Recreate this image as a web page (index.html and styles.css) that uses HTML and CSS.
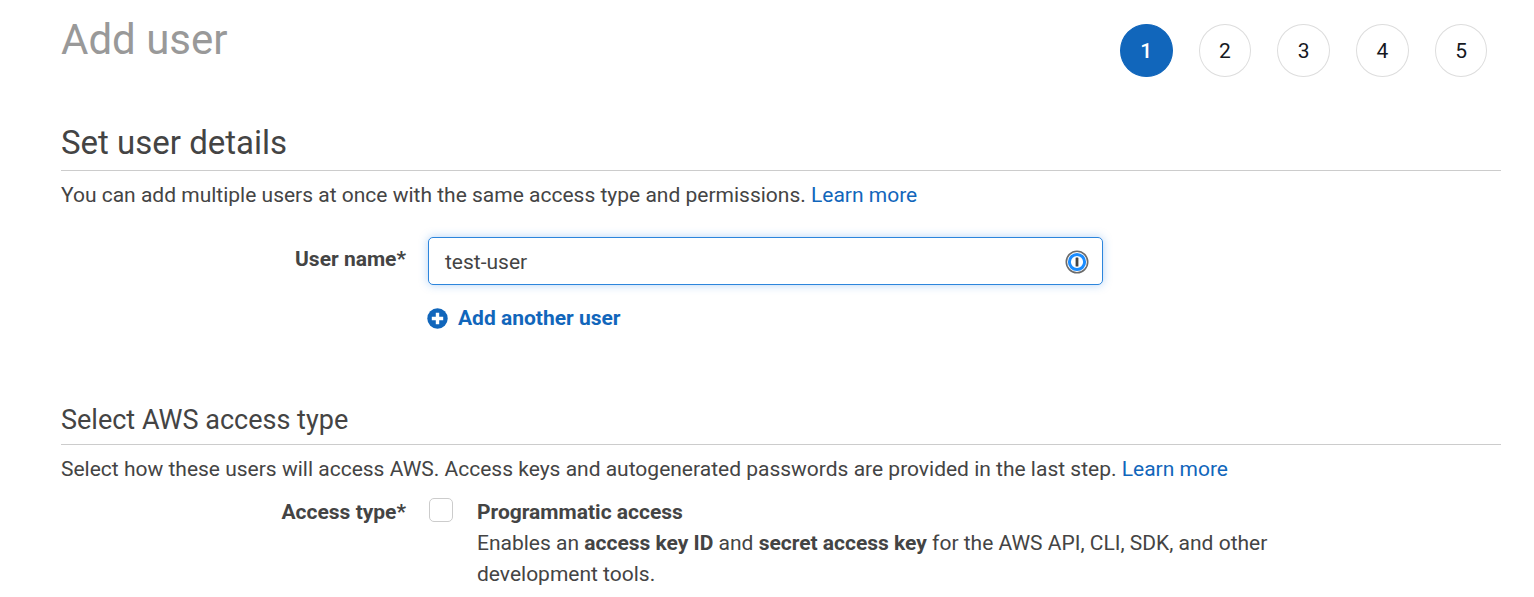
FILE: index.html
```html
<!DOCTYPE html>
<html>
<head>
    <title>Add user</title>
    <link rel="stylesheet" href="styles.css">
</head>
<body>
    <div class="header">
        <h1>Add user</h1>
        <div class="steps">
            <div class="step active">1</div>
            <div class="step">2</div>
            <div class="step">3</div>
            <div class="step">4</div>
            <div class="step">5</div>
        </div>
    </div>

    <h2 class="title-details">Set user details</h2>
    <p class="intro">You can add multiple users at once with the same access type and permissions. <a href="#">Learn more</a></p>

    <div class="row row-name">
        <label class="field-label">User name*</label>
        <div class="field">
            <div class="input">
                <span>test-user</span>
                <svg class="pw-icon" width="24" height="24" viewBox="0 0 24 24">
                    <circle cx="12" cy="12" r="10.7" fill="#fff" stroke="#6b6b6b" stroke-width="1.6"/>
                    <circle cx="12" cy="12" r="7.6" fill="#fff" stroke="#1a8cff" stroke-width="3"/>
                    <rect x="10.6" y="7.4" width="2.8" height="9.2" rx="0.6" fill="#444"/>
                </svg>
            </div>
            <a href="#" class="add-link">
                <svg width="21" height="21" viewBox="0 0 21 21">
                    <circle cx="10.5" cy="10.5" r="10.2" fill="#1166bb"/>
                    <path d="M10.5 4.8v11.4M4.8 10.5h11.4" stroke="#fff" stroke-width="3.4"/>
                </svg>
                <span>Add another user</span>
            </a>
        </div>
    </div>

    <h2 class="title-access">Select AWS access type</h2>
    <p class="intro">Select how these users will access AWS. Access keys and autogenerated passwords are provided in the last step. <a href="#">Learn more</a></p>

    <div class="row row-access">
        <label class="field-label">Access type*</label>
        <div class="checkbox"></div>
        <div class="option">
            <b>Programmatic access</b><br>
            Enables an <b>access key ID</b> and <b>secret access key</b> for the AWS API, CLI, SDK, and other<br>
            development tools.
        </div>
    </div>
</body>
</html>
```
FILE: styles.css
```css
* {
    box-sizing: border-box;
}

body {
    margin: 0;
    padding: 0 33px 0 61px;
    height: 597px;
    overflow: hidden;
    background-color: #ffffff;
    font-family: Roboto, Arial, sans-serif;
    font-size: 21px;
    color: #444444;
}

a {
    color: #1166bb;
    text-decoration: none;
}

.header {
    display: flex;
    justify-content: space-between;
    height: 77px;
}

h1 {
    margin: 14px 0 0 0;
    font-size: 42px;
    line-height: 52px;
    font-weight: 400;
    color: #999999;
}

.steps {
    display: flex;
    gap: 26.2px;
    padding-top: 24px;
    padding-right: 13.7px;
}

.step {
    width: 52.5px;
    height: 53px;
    padding-top: 1px;
    border: 1px solid #dddddd;
    border-radius: 50%;
    display: flex;
    align-items: center;
    justify-content: center;
    color: #16191f;
}

.step.active {
    background-color: #1166bb;
    border-color: #1166bb;
    color: #ffffff;
    font-weight: 500;
}

h2 {
    margin: 0;
    font-weight: 400;
    border-bottom: 1px solid #cccccc;
}

.title-details {
    margin-top: 45px;
    font-size: 33px;
    line-height: 41px;
    padding-bottom: 7px;
}

.title-access {
    margin-top: 74px;
    font-size: 27px;
    line-height: 32px;
    padding-bottom: 8px;
}

.intro {
    margin: 9px 0 0 0;
    line-height: 30px;
}

.row {
    display: flex;
    align-items: flex-start;
}

.field-label {
    font-weight: 700;
    text-align: right;
}

.row-name {
    margin-top: 27px;
}

.row-name .field-label {
    width: 345px;
    padding-top: 7px;
    line-height: 30px;
}

.field {
    margin-left: 22px;
}

.input {
    width: 675px;
    height: 48px;
    display: flex;
    align-items: center;
    justify-content: space-between;
    padding: 2px 13px 0 16px;
    background: #ffffff;
    border: 1px solid #2c85dc;
    border-radius: 5px;
    box-shadow: 0 0 10px rgba(40, 130, 230, 0.35);
}

.pw-icon {
    display: block;
}

.add-link {
    display: flex;
    align-items: center;
    gap: 10px;
    margin-top: 21px;
    margin-left: -1px;
    font-weight: 700;
}

.row-access {
    margin-top: 13px;
    line-height: 31px;
}

.row-access .field-label {
    width: 345px;
}

.checkbox {
    width: 24px;
    height: 24px;
    margin: 1px 0 0 23px;
    border: 1px solid #cccccc;
    border-radius: 5px;
}

.option {
    margin-left: 24px;
}
```
